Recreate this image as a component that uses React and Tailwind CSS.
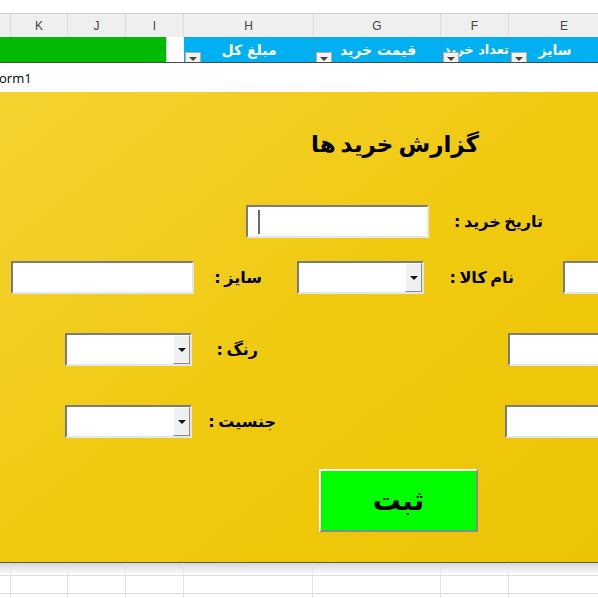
import React from "react";

const AR = { fontFamily: '"DejaVu Sans", "Noto Sans", sans-serif' };

function FilterBtn() {
  return (
    <div className="absolute left-[1px] bottom-0 w-[16px] h-[10px] bg-[#f3f3f3] border border-[#b0b0b0] border-b-0 flex items-start justify-center pt-[4px]">
      <div className="w-0 h-0 border-l-[4px] border-r-[4px] border-t-[4px] border-l-transparent border-r-transparent border-t-[#444]" />
    </div>
  );
}

function TextBox({ className = "", children }) {
  return (
    <div
      className={
        "h-[33px] bg-white border-2 border-t-[#7c7c7c] border-l-[#7c7c7c] border-b-[#e6e6e6] border-r-[#e6e6e6] shrink-0 relative " +
        className
      }
    >
      {children}
    </div>
  );
}

function Combo({ className = "" }) {
  return (
    <div
      className={
        "h-[33px] bg-white border-2 border-t-[#7c7c7c] border-l-[#7c7c7c] border-b-[#e6e6e6] border-r-[#e6e6e6] shrink-0 flex justify-end " +
        className
      }
    >
      <div className="w-[17px] h-full bg-[#f0f0f0] border border-t-[#fdfdfd] border-l-[#fdfdfd] border-b-[#8a8a8a] border-r-[#8a8a8a] flex items-center justify-center">
        <div className="w-0 h-0 border-l-[4px] border-r-[4px] border-t-[4px] border-l-transparent border-r-transparent border-t-[#111]" />
      </div>
    </div>
  );
}

function Label({ className = "", children }) {
  return (
    <div
      dir="rtl"
      className={"shrink-0 text-right text-[16px] font-bold text-black leading-none whitespace-nowrap [word-spacing:-2px] " + className}
      style={AR}
    >
      {children}
    </div>
  );
}

export default function App() {
  const cols = [
    { w: 11, l: "" },
    { w: 57, l: "K" },
    { w: 58, l: "J" },
    { w: 58, l: "I" },
    { w: 130, l: "H" },
    { w: 127, l: "G" },
    { w: 68, l: "F" },
    { w: 111, l: "E" },
  ];
  const gridCols = [11, 57, 58, 58, 129, 128, 68, 111];
  return (
    <div className="w-[598px] h-[598px] overflow-hidden bg-white flex flex-col">
      <div className="h-[13px] shrink-0 bg-white" />
      <div
        className="h-[24px] shrink-0 bg-[#efefef] border-t border-[#d2d2d2] flex text-[12px] text-[#444]"
        style={{ fontFamily: '"Liberation Sans", Arial, sans-serif' }}
      >
        {cols.map((c, i) => (
          <div
            key={i}
            className="shrink-0 h-full border-r border-[#dcdcdc] flex items-center justify-center"
            style={{ width: c.w }}
          >
            {c.l}
          </div>
        ))}
      </div>
      <div className="h-[26px] shrink-0 flex border-b border-[#4a4a4a]">
        <div className="w-[166px] shrink-0 bg-[#00b900] overflow-hidden" />
        <div className="w-[18px] shrink-0 bg-white border-l border-[#cfcfcf]" />
        <div className="w-[130px] shrink-0 bg-[#00b0f0] relative flex justify-center pt-[3px] text-white font-bold text-[14px] whitespace-nowrap" style={AR} dir="rtl">
          مبلغ کل
          <FilterBtn />
        </div>
        <div className="w-[127px] shrink-0 bg-[#00b0f0] border-l border-[#2a9fd0] relative flex justify-center pt-[3px] text-white font-bold text-[14px] whitespace-nowrap" style={AR} dir="rtl">
          قیمت خرید
          <FilterBtn />
        </div>
        <div className="w-[68px] shrink-0 bg-[#00b0f0] border-l border-[#2a9fd0] relative flex justify-start pt-[3px] text-white font-bold text-[13px] overflow-hidden whitespace-nowrap" style={AR} dir="rtl">
          تعداد خرید
          <FilterBtn />
        </div>
        <div className="w-[111px] shrink-0 bg-[#00b0f0] border-l border-[#2a9fd0] relative flex justify-center pt-[3px] text-white font-bold text-[14px]" style={AR} dir="rtl">
          <span className="mr-[20px]">سایز</span>
          <FilterBtn />
        </div>
      </div>
      <div className="shrink-0 flex flex-col">
        <div
          className="h-[29px] bg-white flex items-center text-[13px] text-black pt-[2px]"
          style={{ fontFamily: '"Open Sans", "Liberation Sans", sans-serif' }}
        >
          <span className="-ml-[1px]">orm1</span>
        </div>
        <div className="h-[471px] bg-linear-to-br from-[#f4d22e] via-[#f0ca0f] to-[#ecc406] border-b border-[#5a5a5a] flex flex-col">
          <div className="h-[37px] shrink-0" />
          <div className="flex shrink-0 h-[30px]">
            <div className="ml-[290px] w-[210px] text-center text-[23px] font-bold leading-[30px] whitespace-nowrap [word-spacing:-3px]" dir="rtl" style={AR}>
              گزارش خرید ها
            </div>
          </div>
          <div className="h-[46px] shrink-0" />
          <div className="flex items-center shrink-0">
            <TextBox className="ml-[246px] w-[183px]">
              <div className="absolute left-[10px] top-[3px] w-[2px] h-[24px] bg-[#6a6a6a]" />
            </TextBox>
            <Label className="w-[114px]">تاریخ خرید :</Label>
          </div>
          <div className="h-[23px] shrink-0" />
          <div className="flex items-center shrink-0">
            <TextBox className="ml-[11px] w-[183px]" />
            <Label className="w-[68px]">سایز :</Label>
            <Combo className="ml-[35px] w-[127px]" />
            <Label className="w-[90px]">نام کالا :</Label>
            <TextBox className="ml-[49px] w-[100px]" />
          </div>
          <div className="h-[39px] shrink-0" />
          <div className="flex items-center shrink-0">
            <Combo className="ml-[65px] w-[127px]" />
            <Label className="w-[66px]">رنگ :</Label>
            <TextBox className="ml-[250px] w-[120px]" />
          </div>
          <div className="h-[39px] shrink-0" />
          <div className="flex items-center shrink-0">
            <Combo className="ml-[65px] w-[127px]" />
            <Label className="w-[84px]">جنسیت :</Label>
            <TextBox className="ml-[229px] w-[120px]" />
          </div>
          <div className="h-[31px] shrink-0" />
          <div className="flex shrink-0">
            <div
              className="ml-[319px] w-[159px] h-[63px] bg-[#00ff00] border-2 border-t-[#fafafa] border-l-[#fafafa] border-b-[#8a8a8a] border-r-[#8a8a8a] flex items-center justify-center text-[28px] font-bold text-black"
              style={AR}
              dir="rtl"
            >
              ثبت
            </div>
          </div>
        </div>
      </div>
      <div className="flex-1 flex flex-col">
        <div className="h-[13px] shrink-0 flex bg-linear-to-b from-[#d8d8d8] to-white border-b border-[#dedede]">
          {gridCols.map((w, i) => (
            <div key={i} className="shrink-0 h-full border-r border-[#e3e3e3]" style={{ width: w }} />
          ))}
        </div>
        <div className="h-[18px] shrink-0 flex border-b border-[#dedede]">
          {gridCols.map((w, i) => (
            <div key={i} className="shrink-0 h-full border-r border-[#e3e3e3]" style={{ width: w }} />
          ))}
        </div>
        <div className="flex-1 flex">
          {gridCols.map((w, i) => (
            <div key={i} className="shrink-0 h-full border-r border-[#e3e3e3]" style={{ width: w }} />
          ))}
        </div>
      </div>
    </div>
  );
}
